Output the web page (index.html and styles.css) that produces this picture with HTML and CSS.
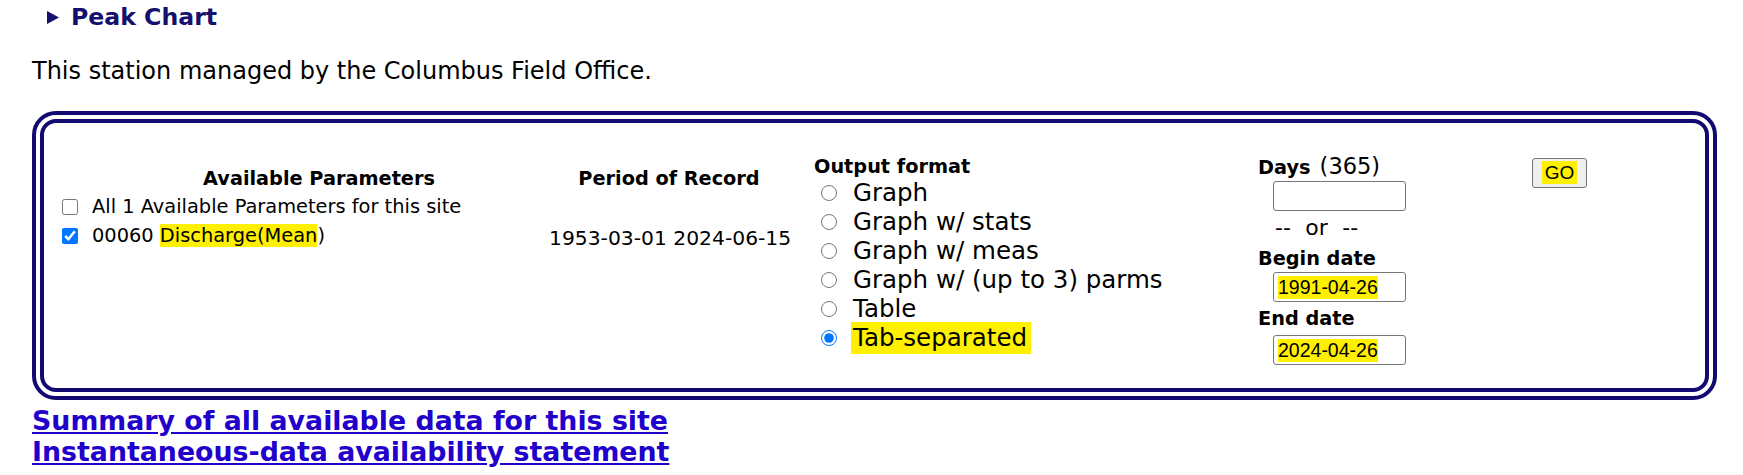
FILE: index.html
```html
<!DOCTYPE html>
<html>
<head>
<meta charset="utf-8">
<link rel="stylesheet" href="styles.css">
</head>
<body>
<div class="page">
  <div class="peak"><svg class="tri" width="12" height="13" viewBox="0 0 12 13"><polygon points="0,0 12,6.5 0,13" fill="#15106e"/></svg><span>Peak Chart</span></div>
  <p class="managed">This station managed by the Columbus Field Office.</p>
  <form class="box">
    <div class="col params">
      <div class="hdr hdr-center">Available Parameters</div>
      <label class="row"><input type="checkbox"><span>All 1 Available Parameters for this site</span></label>
      <label class="row"><input type="checkbox" checked><span>00060 <span class="hl">Discharge(Mean</span>)</span></label>
    </div>
    <div class="col period">
      <div class="hdr hdr-center">Period of Record</div>
      <div class="row"></div>
      <div class="row dates"><span>1953-03-01 2024-06-15</span></div>
    </div>
    <div class="col output">
      <div class="hdr hdr-out">Output format</div>
      <label class="radio"><input type="radio" name="fmt">Graph</label>
      <label class="radio"><input type="radio" name="fmt">Graph w/ stats</label>
      <label class="radio"><input type="radio" name="fmt">Graph w/ meas</label>
      <label class="radio"><input type="radio" name="fmt">Graph w/ (up to 3) parms</label>
      <label class="radio"><input type="radio" name="fmt">Table</label>
      <label class="radio"><input type="radio" name="fmt" checked><span class="hl hl-tab">Tab-separated</span></label>
    </div>
    <div class="col dates-col">
      <div class="hdr">Days<span class="norm"> (365)</span></div>
      <input class="field" type="text" value="">
      <div class="or">-- or --</div>
      <div class="hdr hdr-begin">Begin date</div>
      <div class="field fake"><span class="hl">1991-04-26</span></div>
      <div class="hdr hdr-end">End date</div>
      <div class="field fake"><span class="hl">2024-04-26</span></div>
    </div>
    <div class="col go-col">
      <button type="button" class="go"><span class="hl">GO</span></button>
    </div>
  </form>
  <div class="links">
    <a href="#">Summary of all available data for this site</a>
    <a href="#">Instantaneous-data availability statement</a>
  </div>
</div>
</body>
</html>
```
FILE: styles.css
```css
html, body { margin: 0; padding: 0; background: #fff; }
body { font-family: "DejaVu Sans", Verdana, sans-serif; color: #000; }
.page { padding: 0 0 0 32px; }
.peak { display: flex; align-items: center; height: 34px; padding-left: 15px; font-family: "DejaVu Sans", Verdana, sans-serif; font-weight: bold; font-size: 23.6px; color: #15106e; }
.tri { margin-right: 12px; }
.managed { margin: 0; height: 77px; line-height: 74px; font-family: "DejaVu Sans", Verdana, sans-serif; font-size: 24px; }
.box { display: flex; align-items: flex-start; height: 265px; width: 1661px; border: 12px double #120a70; border-radius: 24px; padding: 0; margin: 0; }
.col { display: flex; flex-direction: column; }
.params { width: 486px; padding-left: 14px; margin-top: 42px; font-size: 19.4px; }
.hdr { font-weight: bold; font-size: 19.3px; line-height: 26px; }
.hdr-center { text-align: center; line-height: 27px; }
.params .hdr-center { padding-left: 36px; }
.row { display: flex; align-items: center; height: 29px; font-size: 19.4px; }
.row input { width: 16px; height: 16px; margin: 0 14px 0 4px; }
.period { width: 250px; padding-right: 20px; margin-top: 42px; }
.dates { font-size: 20.3px; padding-left: 5px; padding-top: 2px; }
.output { width: 444px; margin-top: 33px; }
.hdr-out { line-height: 22px; }
.radio { display: flex; align-items: center; height: 29.1px; font-size: 24.5px; }
.radio input { width: 16px; height: 16px; margin: 0 16px 0 7px; }
.hl { background: #fff000; }
.hl-tab { padding: 1px 4px 2px 2px; margin-left: -2px; }
.dates-col { width: 274px; margin-top: 30px; }
.norm { font-weight: normal; font-size: 22.5px; word-spacing: 2px; }
.field { box-sizing: border-box; width: 133px; height: 30px; margin-left: 15px; border: 1px solid #767676; border-radius: 3px; padding: 0 4px; font-family: "Liberation Sans", Arial, sans-serif; font-size: 19.5px; }
.fake { display: flex; align-items: center; }
.or { margin-left: 17px; font-size: 22px; line-height: 34px; height: 34px; word-spacing: 7.5px; }
.hdr-begin { line-height: 27px; height: 27px; }
.hdr-end { line-height: 32px; height: 32px; margin-top: 1px; }
.go-col { margin-top: 35px; }
.go { box-sizing: border-box; width: 55px; height: 30px; border: 1px solid #767676; border-radius: 3px; background: #efefef; font-family: "Liberation Sans", Arial, sans-serif; font-size: 19px; padding: 0 5px; }
.go .hl { padding: 1px 3px; }
.links { display: flex; flex-direction: column; padding-top: 5px; }
.links a { color: #2200cc; font-family: "DejaVu Sans", Verdana, sans-serif; font-weight: bold; font-size: 26.8px; line-height: 31px; }
```
